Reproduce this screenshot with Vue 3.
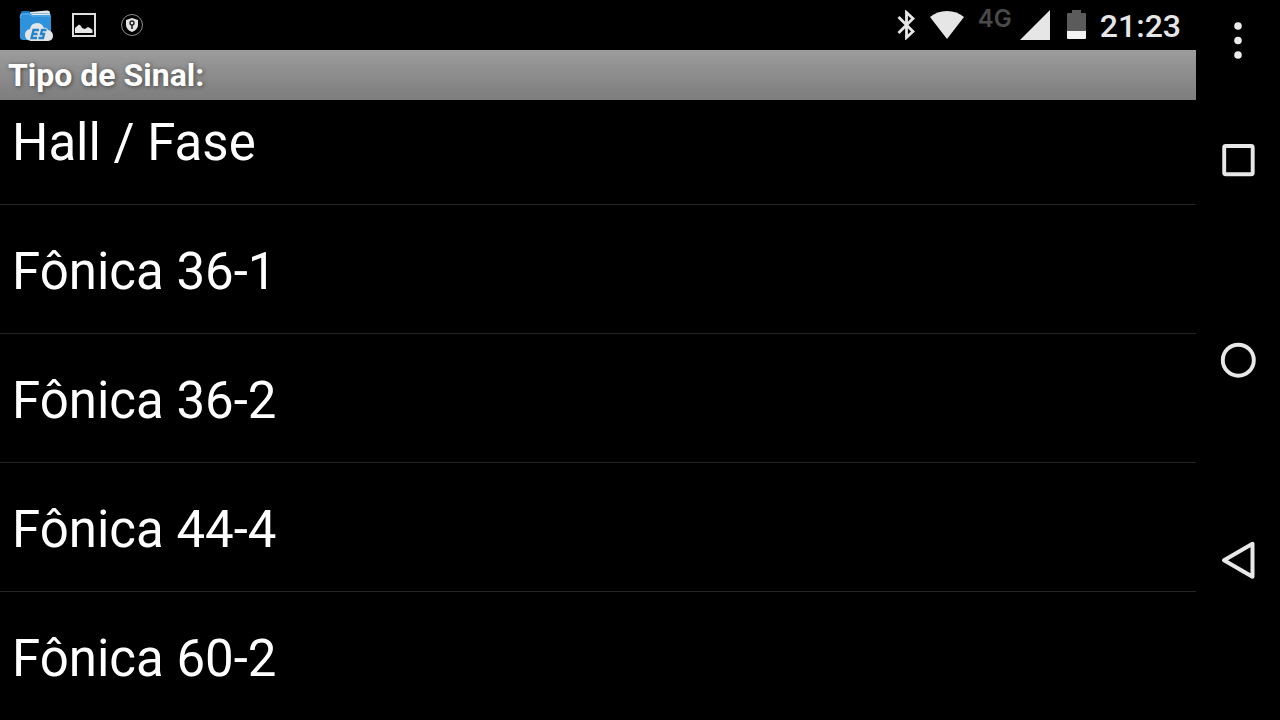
<script setup>
const signals = ['Hall / Fase', 'Fônica 36-1', 'Fônica 36-2', 'Fônica 44-4', 'Fônica 60-2']
</script>

<template>
  <div class="screen">
    <div class="main">
      <header class="status">
        <div class="group notifications">
          <svg width="34" height="32" viewBox="0 0 34 32" role="img" aria-label="ES File Explorer">
            <path d="M2 3.500Q2 2 4 2H10L13 4H30Q32 4 32 7V12H2Z" fill="#1b78bd" />
            <path d="M11 3L28 1.500Q31 1.500 31 4V9H11Z" fill="#dfe9f0" />
            <path d="M12 4.500H31" stroke="#9fb5c4" stroke-width="1" />
            <path d="M1 6Q1 4 3 4H10Q12 4 13 6H30Q32 6 32 8V28Q32 31 29 31H4Q1 31 1 28Z" fill="#2f93dc" />
            <path d="M1 9Q1 5 4 5H10L13 7H31" fill="none" stroke="#58b5f0" stroke-width="1" />
            <path d="M12 32Q6 31 6 26Q6 21 11 20Q12 14 18 14Q23 14 25 19Q28 18 29 21Q34 22 34 27Q34 32 28 32Z" fill="#e2e5e8" />
            <path d="M20 21H14.500L12.500 29H18M13.500 25H18.500" fill="none" stroke="#2384c9" stroke-width="2.300" />
            <path d="M27.500 21H23L22 25H25L24 29H19.500" fill="none" stroke="#2384c9" stroke-width="2.300" />
          </svg>
          <svg width="24" height="24" viewBox="0 0 24 24" role="img" aria-label="Imagem">
            <rect x="1" y="1" width="22" height="22" fill="none" stroke="#dedede" stroke-width="2" />
            <path d="M3 20V15L7 11.500L9 13L10 15L13 16L16 14L18 15L20.500 17V20Z" fill="#e6e6e6" />
          </svg>
          <svg width="24" height="24" viewBox="0 0 24 24" role="img" aria-label="Segurança">
            <circle cx="12" cy="12" r="10.500" fill="none" stroke="#8c8c8c" stroke-width="1" />
            <path d="M12 5L18 7V12Q18 16.500 12 19Q6 16.500 6 12V7Z" fill="#e4e4e4" />
            <circle cx="12" cy="10" r="2" fill="none" stroke="#222" stroke-width="1.400" />
            <path d="M12 12V16" stroke="#222" stroke-width="1.600" />
          </svg>
        </div>
        <div class="group system">
          <svg width="18" height="30" viewBox="0 0 18 30" role="img" aria-label="Bluetooth">
            <path d="M1.500 7L16 21.500L9.500 27.500V2.500L16 8.500L1.500 23" fill="none" stroke="#e6e6e6" stroke-width="2.800" />
          </svg>
          <svg class="wifi" width="36" height="30" viewBox="0 0 36 30" role="img" aria-label="Wi-Fi">
            <path d="M1 7Q8 1 18 1T35 7L18 29Z" fill="#e6e6e6" />
          </svg>
          <span class="network">4G</span>
          <svg width="30" height="30" viewBox="0 0 30 30" role="img" aria-label="Sinal">
            <path d="M0 30L30 0V30Z" fill="#e6e6e6" />
          </svg>
          <svg class="battery" width="19" height="30" viewBox="0 0 19 30" role="img" aria-label="Bateria">
            <path d="M0 4Q0 3 1 3H5V0H14V3H18Q19 3 19 4V21H0Z" fill="#5b5b5b" />
            <path d="M0 21H19V28Q19 29 18 29H1Q0 29 0 28Z" fill="#f2f2f2" />
          </svg>
          <time class="clock">21:23</time>
        </div>
      </header>
      <h1 class="title">Tipo de Sinal:</h1>
      <div class="viewport">
        <ul class="list">
          <li v-for="s in signals" :key="s"><button class="item" type="button">{{ s }}</button></li>
        </ul>
      </div>
    </div>
    <nav class="nav">
      <button class="menu" type="button" aria-label="Menu">
        <svg width="40" height="40" viewBox="0 0 40 40">
          <g fill="#ececec">
            <circle cx="20" cy="6" r="3.800" />
            <circle cx="20" cy="20.500" r="3.800" />
            <circle cx="20" cy="35" r="3.800" />
          </g>
        </svg>
      </button>
      <button type="button" aria-label="Recentes">
        <svg width="40" height="40" viewBox="0 0 40 40">
          <rect x="6.200" y="6" width="28.500" height="28.300" rx="1.500" fill="none" stroke="#e8e8e8" stroke-width="3.900" />
        </svg>
      </button>
      <button type="button" aria-label="Início">
        <svg width="40" height="40" viewBox="0 0 40 40">
          <circle cx="20.300" cy="20.200" r="15.500" fill="none" stroke="#e8e8e8" stroke-width="3.900" />
        </svg>
      </button>
      <button type="button" aria-label="Voltar">
        <svg width="40" height="40" viewBox="0 0 40 40">
          <path d="M6 20.200L34.500 3.800V36.700Z" fill="none" stroke="#e8e8e8" stroke-width="4" stroke-linejoin="round" />
        </svg>
      </button>
    </nav>
  </div>
</template>

<style>
body {
  background: #000;
}
</style>

<style scoped>
.screen {
  display: flex;
  height: 100vh;
  overflow: hidden;
  background: #000;
  color: #fff;
  font-family: Roboto, sans-serif;
}
svg {
  display: block;
  flex: none;
}
button {
  border: 0;
  padding: 0;
  background: none;
  color: inherit;
  font: inherit;
}
.main {
  flex: 1;
  min-width: 0;
  display: flex;
  flex-direction: column;
}
.status {
  display: flex;
  justify-content: space-between;
  height: 50px;
  flex: none;
  padding: 0 15px 0 19px;
}
.group {
  display: flex;
  align-items: center;
}
.notifications {
  gap: 24px;
}
.notifications svg:first-child {
  margin-right: -5px;
}
.wifi {
  margin-left: 14px;
}
.network {
  align-self: flex-start;
  margin: 4px 8px 0 13px;
  color: #4a4a4a;
  font-family: Inter, Roboto, sans-serif;
  font-size: 24px;
  font-weight: 600;
  line-height: 30px;
}
.battery {
  margin: 0 14px 0 17px;
}
.clock {
  padding-top: 2px;
  color: #e6e6e6;
  font-size: 32px;
  font-weight: 500;
  line-height: 48px;
}
.title {
  flex: none;
  margin: 0;
  padding: 0 8px;
  background: linear-gradient(#9c9c9c, #7d7d7d);
  font-size: 32px;
  font-weight: 700;
  line-height: 50px;
  text-shadow: 1px 1px 4px #444;
}
.viewport {
  flex: 1;
  min-height: 0;
  overflow: hidden;
}
.list {
  list-style: none;
  margin: -24px 0 0;
  padding: 0;
}
.item {
  display: block;
  width: 100%;
  padding: 37px 12px 31px;
  border-bottom: 1px solid #242424;
  font-size: 51px;
  line-height: 60px;
  text-align: left;
}
.nav {
  display: flex;
  flex-direction: column;
  width: 84px;
  flex: none;
  padding-bottom: 60px;
}
.nav button {
  flex: 1;
  display: flex;
  align-items: center;
  justify-content: center;
}
.nav .menu {
  flex: none;
  padding-top: 20px;
}
</style>
